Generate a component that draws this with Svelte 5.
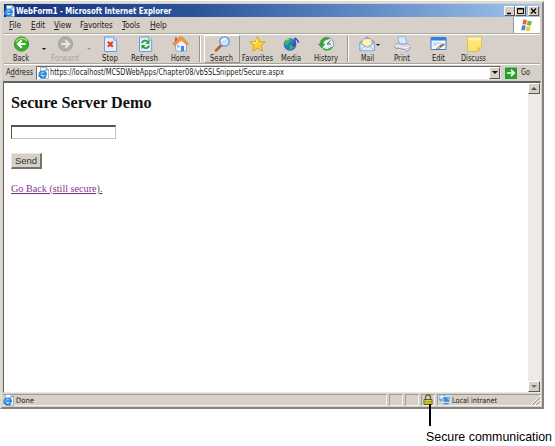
<script>
  const tools = [
    { id: 'back', label: 'Back', w: 34, tw: 16 },
    { id: 'arrow', w: 12 },
    { id: 'forward', label: 'Forward', w: 31, tw: 28, off: true },
    { id: 'arrow', w: 15, off: true },
    { id: 'stop', label: 'Stop', w: 28, tw: 16 },
    { id: 'refresh', label: 'Refresh', w: 42, tw: 27 },
    { id: 'home', label: 'Home', w: 29, tw: 19 },
    { id: 'sep', w: 9 },
    { id: 'search', label: 'Search', w: 36, tw: 23, raised: true },
    { id: 'favorites', label: 'Favorites', w: 35, tw: 31 },
    { id: 'media', label: 'Media', w: 33, tw: 20 },
    { id: 'history', label: 'History', w: 37, tw: 24 },
    { id: 'sep', w: 6 },
    { id: 'mail', label: 'Mail', w: 33, tw: 13 },
    { id: 'print', label: 'Print', w: 37, tw: 16 },
    { id: 'edit', label: 'Edit', w: 35, tw: 13 },
    { id: 'discuss', label: 'Discuss', w: 36, tw: 25 }
  ];
  const menus = [
    ['', 'F', 'ile', 22], ['', 'E', 'dit', 23], ['', 'V', 'iew', 26],
    ['F', 'a', 'vorites', 42], ['', 'T', 'ools', 28], ['', 'H', 'elp', 24]
  ];
</script>

{#snippet page()}
  <svg class="ie" width="11" height="12" viewBox="0 0 11 12">
    <path d="M2.5.5h6l2 2v9h-8z" fill="#f8fbff" stroke="#8297bd" stroke-width=".7" />
    <path d="M8 .7v2h2.3" fill="none" stroke="#6679a5" stroke-width=".7" />
    <path d="M7.8 8.7C6.3 11.6 1.2 10.8 1.5 7.1 1.8 3.5 7.7 3.5 8 7.2H3.2" fill="none" stroke="#2383d8" stroke-width="1.9" />
    <path d="M.5 10C0 7 5 3 9.2 3.5" fill="none" stroke="#54adf0" stroke-width=".8" />
  </svg>
{/snippet}

{#snippet icon(id)}
  <svg width="17" height="16" viewBox="0 0 17 16">
    {#if id === 'back'}
      <circle cx="8.5" cy="8" r="7.2" fill="#35ad29" stroke="#258022" stroke-width=".7" />
      <path d="M3 6a6 5 0 0 1 11-1" fill="none" stroke="#8fe36b" stroke-width="1.6" />
      <path d="M8.7 4.2 4.9 8l3.8 3.8M5.4 8h7.2" fill="none" stroke="#fff" stroke-width="2" />
    {:else if id === 'forward'}
      <circle cx="8.5" cy="8" r="7.2" fill="#b0aeaa" stroke="#989693" stroke-width=".7" />
      <path d="M8.3 4.2 12.1 8l-3.8 3.8M11.6 8H4.4" fill="none" stroke="#e9e7e3" stroke-width="2" />
    {:else if id === 'stop' || id === 'refresh'}
      <path d="M2.5 1h9.2l3 3v11.5H2.5z" fill="#e0edff" stroke="#739bd2" />
      <path d="M11.5 1v3.3h3" fill="#c5dcfa" stroke="#739bd2" stroke-width=".7" />
      {#if id === 'stop'}
        <path d="m5.8 5.8 5 5m0-5-5 5" stroke="#ed3d16" stroke-width="2.2" />
      {:else}
        <path d="M5 7.2c.5-3 4-3.5 6-1.3" fill="none" stroke="#25a129" stroke-width="1.8" />
        <path d="M12.4 3.8v4H8.5zM4.5 13V9h4z" fill="#229b27" />
        <path d="M12 9.5c-.6 3-4.2 3.6-6.2 1.2" fill="none" stroke="#25a129" stroke-width="1.8" />
      {/if}
    {:else if id === 'home'}
      <path d="m3 7 6-5 5.5 6v7.2H4z" fill="#edf4ff" stroke="#7c9cce" stroke-width=".8" />
      <path d="M.7 8 7.5 1l3.2.2L16.5 8l-1.7 1-5.5-5L3 9.5z" fill="#f49a3d" stroke="#d36c1d" stroke-width=".6" />
      <path d="M3 1.5h2v3L3 6z" fill="#b56339" />
      <path d="M9 10h3v5.2H9z" fill="#4686dc" /><path d="M5 9h2.5v2.5H5z" fill="#8dbbf4" />
    {:else if id === 'search'}
      <path d="m2 14.5 6-6" stroke="#ba6132" stroke-width="2.5" stroke-linecap="round" />
      <circle cx="10.5" cy="5.5" r="4.7" fill="#c5e6ff" stroke="#6b91ce" stroke-width="1.3" />
      <path d="M7.8 5c.2-2 2-2.8 4-2" fill="none" stroke="#fff" stroke-width="1.5" />
    {:else if id === 'favorites'}
      <path d="m8.5.6 2.1 5 5.7.3-4.3 3.8 1.5 5.5-5-3-4.9 3 1.4-5.5L.7 5.9l5.7-.3z" fill="#ffd42f" stroke="#d39610" stroke-width=".8" />
      <path d="m8.4 2.5-1.1 4-3.8.5" fill="none" stroke="#fff5a3" />
    {:else if id === 'media'}
      <circle cx="7" cy="8.5" r="6" fill="#287bd5" stroke="#2659a9" stroke-width=".5" />
      <path d="M2 5.5c2-3.3 5.2-3 6.2-1.8L6.5 6 5 8.5 2 9zM7 9l3.8.3-.8 3-3.5 1.3z" fill="#44ba3d" />
      <path d="M3 4.5c1-1 2-1.4 3-1.5" stroke="#b5f2ff" fill="none" />
      <path d="M12 9V1.5c.3 2.2 4 2 3.3 5.3" fill="none" stroke="#314ba1" stroke-width="1.4" />
      <ellipse cx="10.8" cy="9" rx="2" ry="1.5" fill="#3751ae" />
    {:else if id === 'history'}
      <circle cx="9.2" cy="7.8" r="6.4" fill="#e8f2f6" stroke="#8a9caa" />
      <path d="M9 8l3.5-3.5M9 8h4" stroke="#3f5268" />
      <path d="M11.8 2.7C7-.2 1.8 3.2 2.2 8.3L.5 8l3.3 4 3-4H5c0-3 2.5-4.5 6.8-5.3z" fill="#36ac36" stroke="#248425" stroke-width=".5" />
      <path d="M5.3 12.3c3 2.3 6.8 1.5 8.6-1.3" fill="none" stroke="#36ac36" stroke-width="1.5" />
    {:else if id === 'mail'}
      <path d="m1 6 7-5.2L15.5 6v8.5H1z" fill="#97bdf0" stroke="#6689c7" stroke-width=".7" />
      <path d="M4 3h8l1 5-4.5 3L3 8z" fill="#fff1ae" stroke="#dfad5d" stroke-width=".5" />
      <path d="m1 7 7.5 4.6L15.5 7v7.7H1z" fill="#dcecff" stroke="#7ba1d6" stroke-width=".7" />
      <path d="m1 14.5 5-4.4m9.5 4.4-5-4.4" stroke="#7ba1d6" stroke-width=".7" />
    {:else if id === 'print'}
      <path d="m4 1 7-.5 2 7.5H5z" fill="#d6ebff" stroke="#7aa5d7" stroke-width=".7" />
      <path d="m1 9 4-3 1 2h6l1-1 3 3v3l-3.5 2.5L1 12z" fill="#d1d5df" stroke="#8a91a5" stroke-width=".7" />
      <path d="m1 9.5 11 2.2 4-2M4 13l7 2" stroke="#f8f9fc" fill="none" />
      <path d="m3 12 8.5 2" stroke="#727c91" stroke-width=".7" />
    {:else if id === 'edit'}
      <path d="M1 1.5h15v12H1z" fill="#f2f8ff" stroke="#3b80d2" /><path d="M1 1.5h15v3H1z" fill="#3480dc" />
      <path d="M3 7h8M3 9h4" stroke="#9bc3ed" />
      <path d="m7.5 11.5 5-4 2.5 1-6 4.4H6z" fill="#f6bd59" stroke="#b27137" stroke-width=".5" />
      <path d="m9 10.5 4-2.6 1 1-4 2.7z" fill="#3f74bc" />
    {:else if id === 'discuss'}
      <path d="M1.5 1h14v10.5l-4 3.8h-10z" fill="#ffe46e" stroke="#d8b342" stroke-width=".7" />
      <path d="M2 1.6h13v3H2z" fill="#fff3a7" /><path d="M11.5 15.3v-3.8h4z" fill="#eebb38" />
    {/if}
  </svg>
{/snippet}

{#snippet label(text, w, size = 8.4)}
  <svg class="label" width={w + 1} height="11"><text x="0" y="8.3" font-size={size} textLength={w} lengthAdjust="spacingAndGlyphs">{text}</text></svg>
{/snippet}

<div class="canvas">
  <main class="window">
    <header class="title">
      {@render page()}
      <strong><svg class="label" width="156" height="12"><text x="0" y="9" font-size="8.8" textLength="155.5" lengthAdjust="spacingAndGlyphs">WebForm1 - Microsoft Internet Explorer</text></svg></strong>
      <div class="controls">
        <button aria-label="Minimize"><svg width="9" height="8"><path d="M2 6.5h4" stroke="#000" stroke-width="1.5" /></svg></button>
        <button aria-label="Maximize"><svg width="9" height="8"><path d="M1.5 1.5h6v5h-6zM1 2h7" fill="none" stroke="#000" /></svg></button>
        <button class="close" aria-label="Close"><svg width="9" height="8"><path d="m2 1.5 5 5m0-5-5 5" stroke="#000" stroke-width="1.3" /></svg></button>
      </div>
    </header>
    <nav class="menu">
      {#each menus as [a, key, b, w]}
        <div style:width="{w}px"><span>{a}<u>{key}</u>{b}</span></div>
      {/each}
      <div class="brand">
        <svg width="14" height="13" viewBox="0 0 14 13">
          <path d="M3.3 1c1.3-.8 2.5-.5 3.6.1L6 5.8c-1.2-.6-2.4-.7-3.7 0z" fill="#ed6331" />
          <path d="M7.7 1.5c1.4.8 2.6.8 4.2.2L11 6.2c-1.5.7-2.8.5-4.1-.2z" fill="#71b840" />
          <path d="M2.1 6.8c1.3-.7 2.5-.5 3.6.1l-1 4.5c-1.2-.7-2.4-.7-3.6 0z" fill="#438bd5" />
          <path d="M6.6 7.2c1.3.8 2.7.8 4.1.1l-1 4.6c-1.5.7-2.8.6-4.1-.3z" fill="#f5c637" />
        </svg>
      </div>
    </nav>
    <div class="toolbar">
      {#each tools as tool}
        {#if tool.id === 'sep'}
          <div class="sep" style:width="{tool.w}px"><i></i></div>
        {:else if tool.id === 'arrow'}
          <div class="drop" class:off={tool.off} style:width="{tool.w}px"><i></i></div>
        {:else}
          <div class="tool" class:raised={tool.raised} class:off={tool.off} style:width="{tool.w}px">
            {@render icon(tool.id)}
            {@render label(tool.label, tool.tw)}
            {#if tool.id === 'mail'}<i class="mailarrow"></i>{/if}
          </div>
        {/if}
      {/each}
    </div>
    <div class="address">
      <span class="addr"><svg class="label" width="29" height="11"><text x="0" y="8.3" font-size="8.4" textLength="27" lengthAdjust="spacingAndGlyphs">A<tspan text-decoration="underline">d</tspan>dress</text></svg></span>
      <div class="url">
        {@render page()}
        {@render label('https://localhost/MCSDWebApps/Chapter08/vbSSLSnippet/Secure.aspx', 234)}
        <button class="select" aria-label="History list"><i></i></button>
      </div>
      <svg class="go" width="12" height="12"><path d="M0 0h12v12H0z" fill="#22a02a" /><path d="M0 .5h12" stroke="#68c966" /><path d="M2 6h7M6 2.8 9.2 6 6 9.2" fill="none" stroke="#fff" stroke-width="1.7" /></svg>
      {@render label('Go', 9)}
    </div>
    <section class="view">
      <div class="doc">
        <h1>Secure Server Demo</h1>
        <input aria-label="Message" />
        <button class="send">Send</button>
        <a href="#top"><svg width="93" height="14"><text x="0" y="10" font-size="11" textLength="91.5" lengthAdjust="spacingAndGlyphs">Go Back (still secure).</text></svg></a>
      </div>
      <div class="scroll"><button aria-label="Scroll up"><i class="up"></i></button><button aria-label="Scroll down"><i></i></button></div>
    </section>
    <footer>
      <div class="pane done">{@render page()}{@render label('Done', 18, 7.5)}</div>
      <div class="pane"></div>
      <div class="pane"></div>
      <div class="pane lock">
        <svg width="10" height="12" viewBox="0 0 10 12"><path d="M2.5 6V3.4C2.5.2 7.5.2 7.5 3.4V6" fill="none" stroke="#66652b" stroke-width="1.3" /><path d="M1 5.5h8v5H1z" fill="#ded538" stroke="#55531c" stroke-width=".9" /><path d="M2 7.5h6M2 9.2h6" stroke="#8e8928" stroke-width=".6" /></svg>
      </div>
      <div class="pane zone">
        <svg width="13" height="12" viewBox="0 0 13 12"><circle cx="4.5" cy="4" r="3.5" fill="#5ba7e4" /><path d="M1.5 3c1-2 3-2.3 4-1.5L4.5 4 2 5z" fill="#d8f0ff" /><path d="M5 2.5h7v5.8H5z" fill="#378bd8" stroke="#dceaff" /><path d="M7.5 9h3v1.5H6l-1-1z" fill="#6685b8" /><path d="m8 3.5 3 .2v3z" fill="#75c8fa" /></svg>
        {@render label('Local intranet', 45, 7.5)}
        <svg class="grip" width="10" height="10"><path d="m1 10 9-9M5 10l5-5M8.5 10l1.5-1.5" stroke="#fff" /><path d="m2.2 10 7.8-7.8M6.2 10l3.8-3.8" stroke="#8c8983" /></svg>
      </div>
    </footer>
  </main>
  <div class="callout">
    <i></i>
    <svg width="128" height="16"><text x="0" y="12" font-size="13.6" textLength="126" lengthAdjust="spacingAndGlyphs">Secure communication</text></svg>
  </div>
</div>

<style>
  :global(body) { background: #fff; overflow: hidden; }
  .canvas { width: 555px; height: 446px; overflow: hidden; position: relative; font: 8px "DejaVu Sans Condensed", "DejaVu Sans", sans-serif; color: #222; }
  .canvas * { box-sizing: border-box; }
  svg { display: block; flex: none; overflow: visible; }
  button { padding: 0; margin: 0; border: 1px solid; border-color: #fff #5b5854 #5b5854 #fff; background: #d6d0c8; border-radius: 0; display: flex; align-items: center; justify-content: center; }
  .window { width: 544px; height: 408px; margin-top: 1px; display: flex; flex-direction: column; background: #d6d0c8; border: 2px solid; border-color: #dedbd4 #858381 #858381 #dedbd4; padding: 1px 2px 0; }
  .label text { fill: currentColor; }
  .title { height: 13px; flex: none; display: flex; align-items: center; background: linear-gradient(90deg, #15347f 0%, #2c529a 35%, #668fc9 70%, #a3c5ec 100%); color: #fff; }
  .title strong { margin-left: 1px; }
  .title .label { font-weight: bold; }
  .controls { margin-left: auto; display: flex; }
  .controls button { width: 11px; height: 10px; }
  .controls .close { margin: 0 1px 0 2px; }
  .menu { height: 17px; flex: none; display: flex; align-items: center; padding-left: 5px; border-bottom: 1px solid #aaa69e; font-size: 8.4px; letter-spacing: -.15px; }
  .menu div:not(.brand) { white-space: nowrap; }
  .menu u { text-underline-offset: 1px; text-decoration-thickness: 1px; }
  .brand { width: 27px; height: 16px; margin-left: auto; background: #fff; border-left: 1px solid #99958d; display: flex; align-items: center; justify-content: center; }
  .toolbar { height: 30px; flex: none; display: flex; border-top: 1px solid #fff; border-bottom: 1px solid #aaa69e; }
  .tool { display: flex; flex-direction: column; align-items: center; padding-top: 1px; position: relative; }
  .tool .label { margin-top: 1px; }
  .raised { border: 1px solid; border-color: #fff #97938b #97938b #fff; padding-top: 0; }
  .off { color: #aaa69f; }
  .sep { display: flex; justify-content: center; padding: 1px 0; }
  .sep i { width: 2px; border-left: 1px solid #99958d; border-right: 1px solid #fff; }
  .drop { display: flex; justify-content: center; padding-top: 13px; }
  .drop i, .select i, .scroll i, .mailarrow { width: 0; height: 0; border: 2px solid transparent; border-top-color: #111; border-bottom: 0; }
  .drop.off i { border-top-color: #99958e; }
  .mailarrow { position: absolute; left: 25px; top: 9px; }
  .address { height: 17px; flex: none; display: flex; align-items: center; border-top: 1px solid #fff; padding: 0 0 1px 2px; }
  .addr { width: 30px; }
  .url { width: 465px; height: 14px; background: #fff; border: 1px solid; border-color: #6d6a65 #e7e4de #e7e4de #6d6a65; display: flex; align-items: center; padding-left: 1px; }
  .url .label { margin-left: 1px; }
  .select { width: 11px; height: 12px; margin-left: auto; }
  .select i { border-width: 3px 3px 0; }
  .go { margin: 0 4px 0 4px; }
  .view { height: 312px; flex: none; display: flex; margin: 0 -1px; background: #fff; border: 1px solid; border-color: #67645f #ece9e3 #ece9e3 #67645f; border-top-width: 2px; }
  .doc { flex: 1; padding: 11px 0 0 7px; display: flex; flex-direction: column; align-items: flex-start; }
  h1 { margin: 0; height: 18px; font: bold 16.2px/18px "Liberation Serif", serif; white-space: nowrap; color: #111; }
  input { width: 105px; height: 14px; margin: 13px 0 14px; padding: 0; border: 1px solid; border-color: #55534f #c5c1b9 #c5c1b9 #55534f; border-top-width: 2px; outline: 0; background: #fff; }
  .send { width: 31px; height: 16px; font: 9.5px "Liberation Sans", sans-serif; color: #333; border-width: 1px 2px 2px 1px; border-color: #e9e6e0 #76736f #76736f #e9e6e0; }
  a { margin-top: 13px; color: #84358c; font-family: "Liberation Serif", serif; text-decoration: none; }
  a text { fill: #84358c; text-decoration: underline; }
  .scroll { width: 12px; background: #edebe6; display: flex; flex-direction: column; justify-content: space-between; }
  .scroll button { width: 12px; height: 11px; }
  .scroll i { border-width: 3px 3px 0; border-top-color: #77736e; }
  .scroll i.up { border-width: 0 3px 3px; border-color: transparent transparent #55524e; border-style: solid; }
  footer { flex: 1; display: flex; gap: 2px; padding-top: 1px; margin: 0 -1px; }
  .pane { width: 14px; height: 12px; border: 1px solid; border-color: #9f9b94 #f3f0eb #f3f0eb #9f9b94; display: flex; align-items: center; }
  .done { width: 384px; border-left: 0; }
  .done .label { margin-left: 2px; }
  .lock { justify-content: center; }
  .zone { flex: 1; }
  .zone .label { margin-left: 1px; }
  .grip { margin-left: auto; }
  .callout { position: absolute; left: 426px; top: 404px; font-family: "Liberation Sans", sans-serif; color: #000; }
  .callout i { display: block; width: 2px; height: 22px; margin-left: 3px; background: #000; }
  .callout svg { margin-top: 3px; }
</style>
